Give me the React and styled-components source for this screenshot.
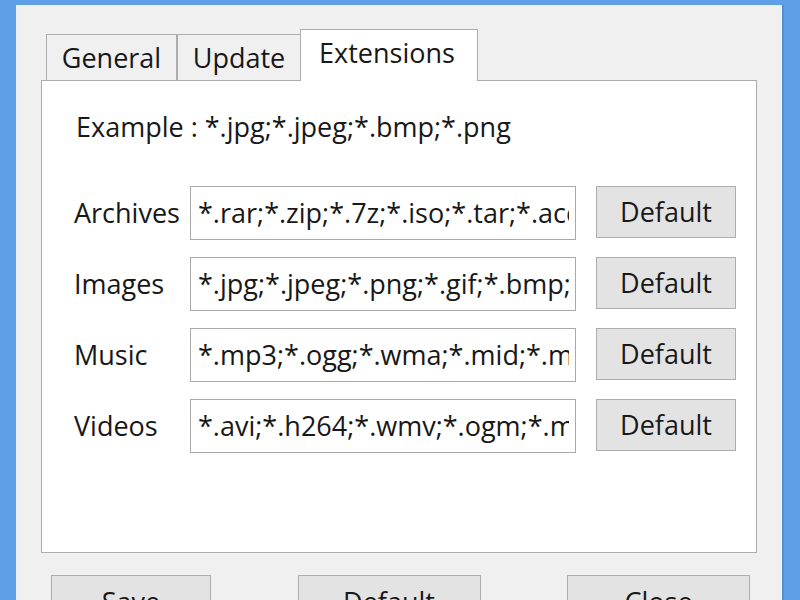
import React from "react";
import styled, { createGlobalStyle } from "styled-components";

const Global = createGlobalStyle`
  html, body { margin: 0; padding: 0; overflow: hidden; }
  body { background: #5f9fe8; font-family: "Open Sans", "Noto Sans", sans-serif; }
`;

const Frame = styled.div`
  width: 800px;
  height: 600px;
  box-sizing: border-box;
  padding: 5px 16px 0 16px;
  background: #5f9fe8;
  display: flex;
  overflow: hidden;
`;

const Window = styled.div`
  flex: 1;
  min-width: 0;
  background: #f0f0f0;
  border-left: 2px solid #e8f1fb;
  border-right: 2px solid #4f8fd8;
  padding: 24px 25px 0 23px;
  display: flex;
  flex-direction: column;
  color: #181818;
  font-size: 27px;
`;

const TabStrip = styled.div`
  display: flex;
  align-items: flex-end;
  height: 52px;
  flex-shrink: 0;
  margin-bottom: -1px;
  padding-left: 5px;
`;

const Tab = styled.div`
  position: relative;
  box-sizing: border-box;
  height: ${(p) => (p.$active ? "52px" : "47px")};
  width: ${(p) => p.$w}px;
  margin-left: ${(p) => (p.$active ? "-1px" : "0")};
  background: ${(p) => (p.$active ? "#ffffff" : "#f0f0f0")};
  border: 1px solid #adadad;
  border-bottom: ${(p) => (p.$active ? "none" : "1px solid #adadad")};
  z-index: ${(p) => (p.$active ? 2 : 0)};
  display: flex;
  justify-content: center;
  align-items: ${(p) => (p.$active ? "flex-start" : "center")};
  padding-top: ${(p) => (p.$active ? "5px" : "0")};
  padding-right: ${(p) => (p.$active ? "4px" : "0")};
  line-height: 36px;
  & + & { border-left: ${(p) => (p.$active ? "1px solid #adadad" : "none")}; }
`;

const Panel = styled.div`
  position: relative;
  z-index: 1;
  box-sizing: border-box;
  height: 473px;
  flex-shrink: 0;
  background: #ffffff;
  border: 1px solid #adadad;
  padding: 28px 20px 0 32px;
  display: flex;
  flex-direction: column;
`;

const Example = styled.div`
  line-height: 36px;
  padding-left: 2px;
  margin-bottom: 41px;
`;

const Rows = styled.div`
  display: flex;
  flex-direction: column;
  gap: 17px;
`;

const Row = styled.div`
  display: grid;
  grid-template-columns: 96px 386px 140px;
  column-gap: 20px;
  align-items: start;
`;

const Label = styled.div`
  height: 54px;
  display: flex;
  align-items: center;
  padding-bottom: 2px;
  box-sizing: border-box;
  white-space: nowrap;
`;

const Field = styled.input`
  box-sizing: border-box;
  width: 386px;
  height: 54px;
  border: 1px solid #a9a9a9;
  background: #fff;
  font: inherit;
  color: inherit;
  padding: 0 6px 2px 7px;
  margin: 0;
  outline: none;
`;

const Button = styled.div`
  box-sizing: border-box;
  flex-shrink: 0;
  width: ${(p) => p.$w}px;
  height: ${(p) => p.$h}px;
  background: #e3e3e3;
  border: 1px solid #adadad;
  display: flex;
  align-items: center;
  justify-content: center;
  padding-bottom: 2px;
`;

const Footer = styled.div`
  display: flex;
  flex-shrink: 0;
  justify-content: space-between;
  margin-top: 22px;
  padding: 0 7px 0 10px;
`;

const rows = [
  ["Archives", "*.rar;*.zip;*.7z;*.iso;*.tar;*.ace;*.gz;*.bz2"],
  ["Images", "*.jpg;*.jpeg;*.png;*.gif;*.bmp;*.tif"],
  ["Music", "*.mp3;*.ogg;*.wma;*.mid;*.m4a;*.flac"],
  ["Videos", "*.avi;*.h264;*.wmv;*.ogm;*.mkv;*.mp4"],
];

export default function App() {
  return (
    <>
      <Global />
      <Frame>
        <Window>
          <TabStrip>
            <Tab $w={131}>General</Tab>
            <Tab $w={124}>Update</Tab>
            <Tab $w={178} $active>Extensions</Tab>
          </TabStrip>
          <Panel>
            <Example>Example : *.jpg;*.jpeg;*.bmp;*.png</Example>
            <Rows>
              {rows.map(([label, value]) => (
                <Row key={label}>
                  <Label>{label}</Label>
                  <Field readOnly value={value} />
                  <Button $w={140} $h={52}>Default</Button>
                </Row>
              ))}
            </Rows>
          </Panel>
          <Footer>
            <Button $w={160} $h={54}>Save</Button>
            <Button $w={183} $h={54}>Default</Button>
            <Button $w={183} $h={54}>Close</Button>
          </Footer>
        </Window>
      </Frame>
    </>
  );
}
